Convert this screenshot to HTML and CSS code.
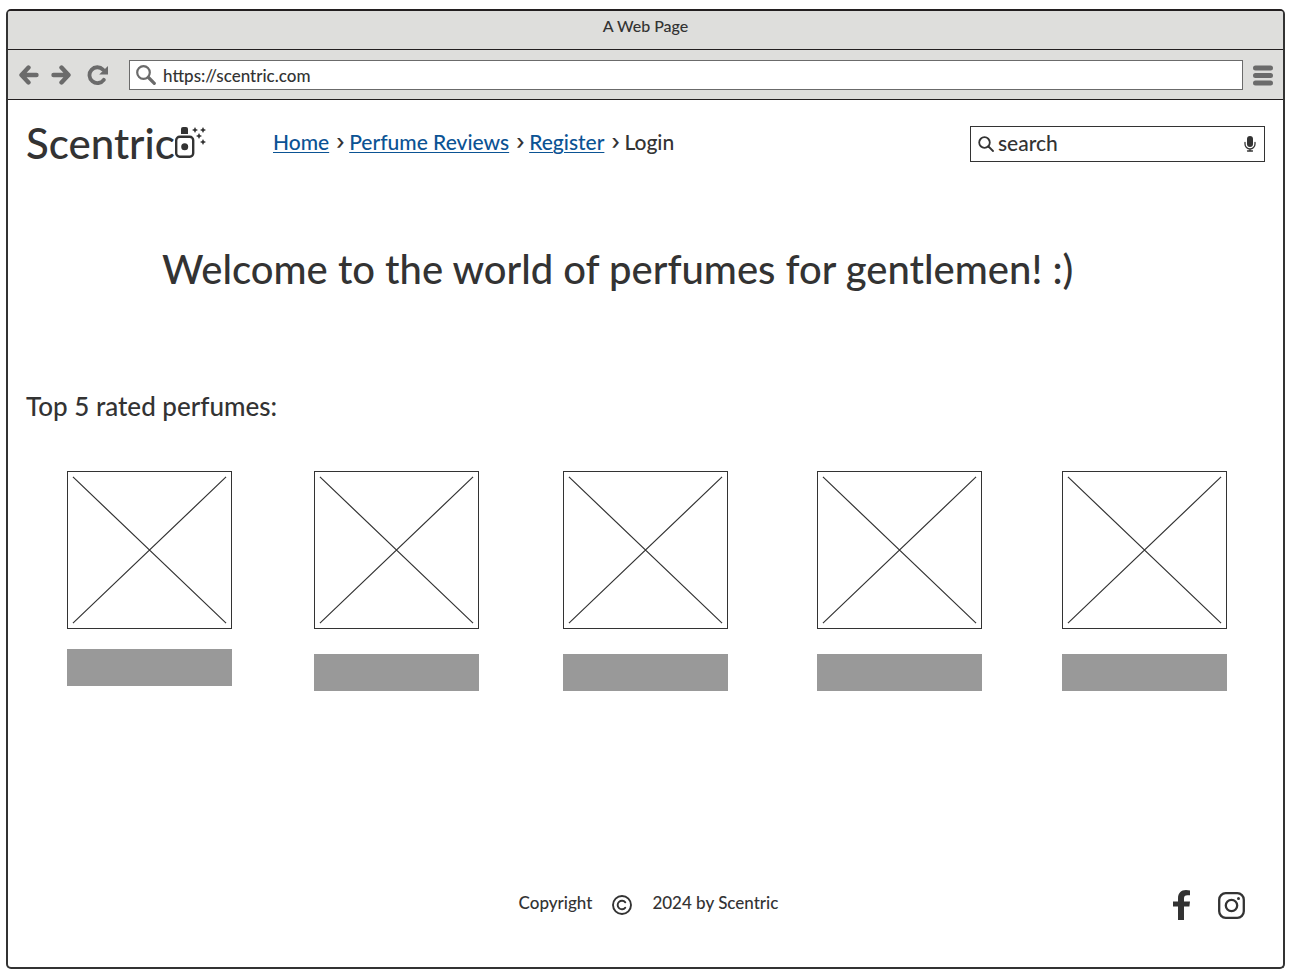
FILE: index.html
```
<!DOCTYPE html>
<html lang="en">
<head>
<meta charset="utf-8">
<title>Scentric</title>
<link rel="stylesheet" href="styles.css">
</head>
<body>
<div class="window">
  <div class="titlebar">A Web Page</div>
  <div class="toolbar">
    <button class="tool back" type="button" aria-label="Back"><svg width="20" height="20" viewBox="0 0 20 20" fill="none" stroke="currentColor" stroke-width="4.4" stroke-linecap="round" stroke-linejoin="round"><path d="M9.5 2.5 2.5 10l7 7.500M3.500 10h14"/></svg></button>
    <button class="tool forward" type="button" aria-label="Forward"><svg width="20" height="20" viewBox="0 0 20 20" fill="none" stroke="currentColor" stroke-width="4.4" stroke-linecap="round" stroke-linejoin="round"><path d="M10.500 2.500l7 7.500-7 7.500M16.500 10h-14"/></svg></button>
    <button class="tool reload" type="button" aria-label="Reload"><svg width="22" height="20" viewBox="0 0 22 20"><path d="M16 4.600A7.900 7.900 0 1 0 16.800 14.800" fill="none" stroke="currentColor" stroke-width="3.800" stroke-linecap="round"/><path d="M21 1v8.600h-8.800z" fill="currentColor"/></svg></button>
    <label class="address">
      <svg width="20" height="20" viewBox="0 0 20 20" fill="none" stroke="#6b6b6b"><circle cx="7.500" cy="7.500" r="6.300" stroke-width="2.200"/><path d="m12.500 12.500 5.800 5.800" stroke-width="3.200" stroke-linecap="round"/></svg>
      <input type="text" value="https://scentric.com" aria-label="Address">
    </label>
    <button class="tool menu" type="button" aria-label="Menu"><svg width="20" height="21" viewBox="0 0 20 21" fill="none" stroke="currentColor" stroke-width="5" stroke-linecap="round"><path d="M2.500 3h15M2.500 10.500h15M2.500 18h15"/></svg></button>
  </div>
  <header class="header">
    <a class="logo" href="#home"><span>Scentric</span><svg width="32" height="32" viewBox="0 0 32 32" fill="#333"><path d="M6 7V2q0-2 2-2h3q2 0 2 2v5z"/><rect x="1.200" y="9.700" width="17" height="20" rx="3.500" fill="none" stroke="#333" stroke-width="2.400"/><circle cx="9.700" cy="19.700" r="3.500"/><path d="m20 0 1 2 2 1-2 1-1 2-1-2-2-1 2-1zM28 0l1 2 2 1-2 1-1 2-1-2-2-1 2-1zM24 6l1 2 2 1-2 1-1 2-1-2-2-1 2-1zM28 12l1 2 2 1-2 1-1 2-1-2-2-1 2-1z"/></svg></a>
    <nav class="crumbs" aria-label="Main">
      <a href="#home">Home</a><span class="sep">›</span><a href="#reviews">Perfume Reviews</a><span class="sep">›</span><a href="#register">Register</a><span class="sep">›</span><span>Login</span>
    </nav>
    <label class="search">
      <svg width="16" height="16" viewBox="0 0 16 16" fill="none" stroke="#333" stroke-width="1.800" stroke-linecap="round"><circle cx="6.500" cy="6.500" r="5.300"/><path d="m10.500 10.500 4.500 4.500"/></svg>
      <input type="text" value="search" aria-label="Search">
      <svg width="12" height="16" viewBox="0 0 12 16" fill="none" stroke="#333" stroke-width="1.300" stroke-linecap="round"><rect x="3" y="0" width="6" height="11" rx="3" fill="#333" stroke="none"/><path d="M1 6.500v1.500a5 5 0 0 0 10 0V6.500M6 13v2M3.500 15h5"/></svg>
    </label>
  </header>
  <main class="main">
    <h1 class="welcome">Welcome to the world of perfumes for gentlemen! :)</h1>
    <h2 class="subtitle">Top 5 rated perfumes:</h2>
    <div class="perfumes">
      <div class="perfume"><svg class="photo" viewBox="0 0 165 158" preserveAspectRatio="none"><path d="m5 5 155 148M160 5 5 153"/></svg><div class="caption"></div></div>
      <div class="perfume"><svg class="photo" viewBox="0 0 165 158" preserveAspectRatio="none"><path d="m5 5 155 148M160 5 5 153"/></svg><div class="caption"></div></div>
      <div class="perfume"><svg class="photo" viewBox="0 0 165 158" preserveAspectRatio="none"><path d="m5 5 155 148M160 5 5 153"/></svg><div class="caption"></div></div>
      <div class="perfume"><svg class="photo" viewBox="0 0 165 158" preserveAspectRatio="none"><path d="m5 5 155 148M160 5 5 153"/></svg><div class="caption"></div></div>
      <div class="perfume"><svg class="photo" viewBox="0 0 165 158" preserveAspectRatio="none"><path d="m5 5 155 148M160 5 5 153"/></svg><div class="caption"></div></div>
    </div>
  </main>
  <footer class="footer">
    <div class="copyright"><span>Copyright</span><svg width="20" height="20" viewBox="0 0 20 20" fill="none" stroke="#333" stroke-width="1.900" stroke-linecap="round"><circle cx="10" cy="10" r="9"/><path d="M13.300 7.300a4.300 4.300 0 1 0 0 5.400"/></svg><span>2024 by Scentric</span></div>
    <div class="social">
      <a href="#facebook" aria-label="Facebook"><svg width="18" height="30" viewBox="0 0 18 30" fill="#333"><path d="M5 30V16.500H0v-5h5V8.500C5 3 8 0 13 0q2.500 0 4 .4v4.800h-2.500C12 5.200 11 6 11 8.500v3h6l-.6 5H11V30z"/></svg></a>
      <a href="#instagram" aria-label="Instagram"><svg width="27" height="27" viewBox="0 0 27 27" fill="none" stroke="#333" stroke-width="2.300"><rect x="1.200" y="1.200" width="24.600" height="24.600" rx="6.500"/><circle cx="13.500" cy="13.500" r="5.700"/><circle cx="20.500" cy="6.600" r="1.500" fill="#333" stroke="none"/></svg></a>
    </div>
  </footer>
</div>
</body>
</html>
```
FILE: styles.css
```
* { box-sizing: border-box; }
body {
  margin: 0;
  padding: 9px 6px 3px;
  background: #fff;
  color: #333;
  font-family: Lato, "Open Sans", sans-serif;
  font-weight: 500;
}
svg { display: block; flex: none; }
input {
  flex: 1;
  min-width: 0;
  padding: 0;
  border: 0;
  outline: 0;
  background: none;
  color: inherit;
  font: inherit;
}
.window {
  display: flex;
  flex-direction: column;
  min-height: calc(100vh - 12px);
  border: 2px solid #333;
  border-top-color: #231f20;
  border-radius: 5px;
  overflow: hidden;
}
.titlebar {
  height: 39px;
  border-bottom: 1px solid #231f20;
  background: #dededc;
  font-size: 16px;
  line-height: 30px;
  text-align: center;
}
.toolbar {
  display: flex;
  align-items: center;
  height: 50px;
  padding: 1px 10px 0 11px;
  border-bottom: 1px solid #231f20;
  background: #dededc;
}
.tool {
  padding: 0;
  border: 0;
  background: none;
  color: #6b6b6b;
}
.forward { margin-left: 12px; }
.reload { margin-left: 16px; }
.menu { margin-left: 10px; }
.address {
  display: flex;
  flex: 1;
  align-items: center;
  gap: 7px;
  height: 30px;
  margin-left: 20px;
  padding: 0 6px;
  border: 1px solid #6b6b6b;
  background: #fff;
  font-size: 17px;
}
.header {
  display: flex;
  align-items: center;
  padding: 26px 18px 0;
}
.logo {
  display: flex;
  align-items: center;
  width: 180px;
  padding-bottom: 2px;
  color: #333;
  font-size: 42px;
  line-height: 34px;
  text-decoration: none;
}
.crumbs {
  display: flex;
  margin-left: 67px;
  padding-bottom: 5px;
  font-size: 21px;
  line-height: 24px;
}
.crumbs a {
  color: #0b5394;
  text-decoration-thickness: 1px;
  text-underline-offset: 2px;
}
.sep {
  width: 20px;
  padding-left: 7px;
  font-family: Inter, sans-serif;
}
.search {
  display: flex;
  align-items: center;
  gap: 4px;
  width: 295px;
  height: 36px;
  margin-left: auto;
  padding: 0 8px 0 7px;
  border: 1px solid #333;
  font-size: 21px;
}
.search input { padding-bottom: 3px; }
.main { flex: 1; }
.welcome {
  margin: 83px 0 0 154px;
  font-size: 40px;
  font-weight: 500;
  line-height: 48px;
}
.subtitle {
  margin: 98px 0 0 18px;
  font-size: 26px;
  font-weight: 500;
  line-height: 30px;
}
.perfumes {
  display: grid;
  grid-template-columns: 247fr 249fr 254fr 245fr 165px;
  margin: 50px 56px 0 59px;
}
.perfume { width: 165px; }
.photo {
  width: 100%;
  height: 158px;
  border: 1px solid #333;
  fill: none;
  stroke: #333;
  stroke-width: 1.2;
}
.caption {
  height: 37px;
  margin-top: 25px;
  background: #999;
}
.perfume:first-child .caption { margin-top: 20px; }
.footer {
  display: grid;
  grid-template-columns: 1fr auto 1fr;
  align-items: center;
  padding: 0 38px 47px 44px;
}
.copyright {
  display: flex;
  grid-column: 2;
  align-items: center;
  gap: 20px;
  font-size: 17px;
}
.copyright span { padding-bottom: 6px; }
.social {
  display: flex;
  align-items: center;
  justify-content: flex-end;
  gap: 27px;
}
```
